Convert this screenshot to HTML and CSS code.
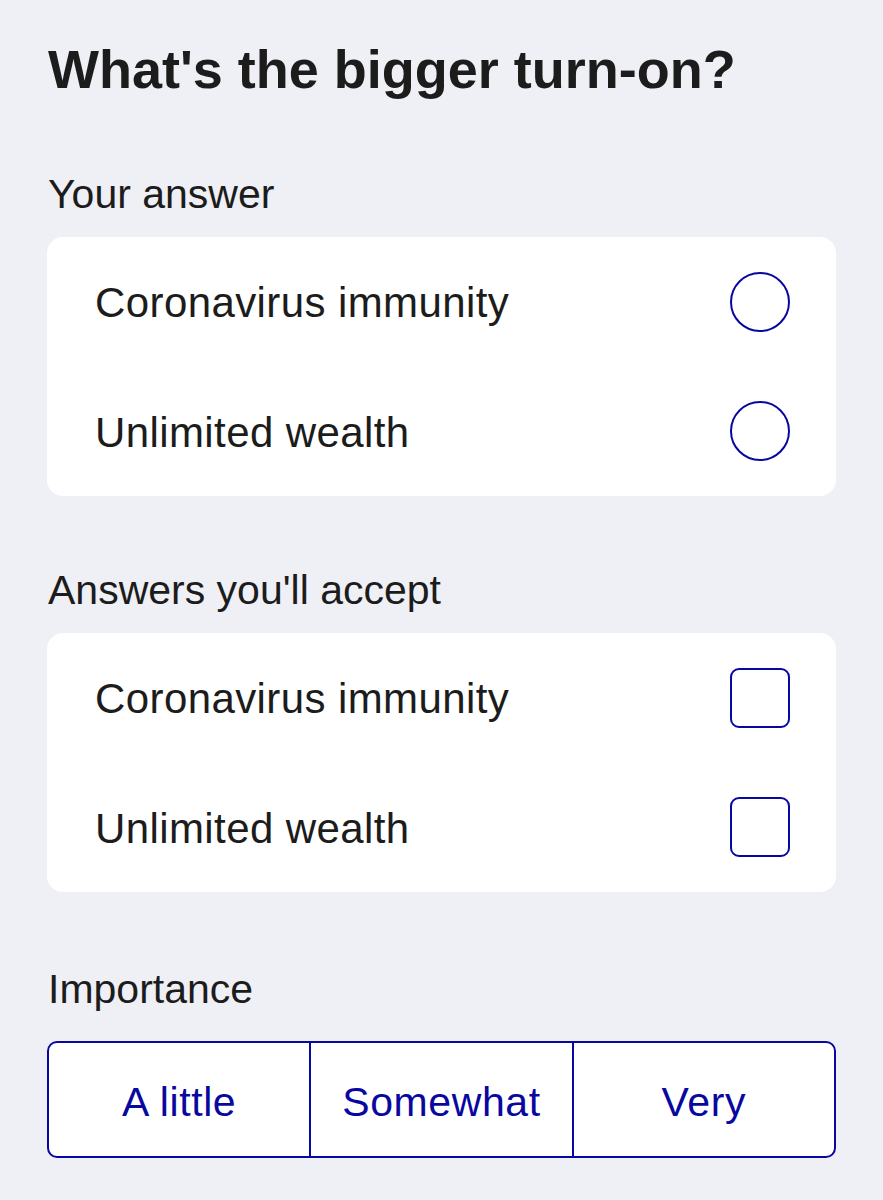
FILE: index.html
```html
<!DOCTYPE html>
<html lang="en">

<head>
  <meta charset="UTF-8" />
  <meta name="viewport" content="width=device-width, initial-scale=1.0" />
  <title>Question</title>
  <link rel="stylesheet" href="styles.css">
</head>

<body>
  <div class="question">
    <h1 class="question-title">What's the bigger turn-on?</h1>

    <section class="block">
      <h2 class="block-label">Your answer</h2>
      <ul class="card">
        <li class="option">
          <span>Coronavirus immunity</span>
          <span class="radio"></span>
        </li>
        <li class="option">
          <span>Unlimited wealth</span>
          <span class="radio"></span>
        </li>
      </ul>
    </section>

    <section class="block">
      <h2 class="block-label">Answers you'll accept</h2>
      <ul class="card">
        <li class="option">
          <span>Coronavirus immunity</span>
          <span class="check"></span>
        </li>
        <li class="option">
          <span>Unlimited wealth</span>
          <span class="check"></span>
        </li>
      </ul>
    </section>

    <section class="block">
      <h2 class="block-label">Importance</h2>
      <div class="segments">
        <button>A little</button>
        <button>Somewhat</button>
        <button>Very</button>
      </div>
    </section>
  </div>
</body>

</html>
```

FILE: styles.css
```css
* {
  box-sizing: border-box;
}

body {
  margin: 0;
  background: #eff0f5;
  font-family: "Liberation Sans", Arial, sans-serif;
  color: #1c1c1c;
}

.question {
  padding: 39px 47px 40px 47px;
}

.question-title {
  margin: 0 0 0 1px;
  font-size: 54px;
  line-height: 60px;
  font-weight: 700;
}

.block {
  margin-top: 71px;
}

.block + .block {
  margin-top: 70px;
}

.block-label {
  margin: 0 0 19px 1px;
  font-size: 41px;
  line-height: 48px;
  font-weight: 400;
}

.block:last-child .block-label {
  padding-top: 3px;
  margin-bottom: 0;
}

.card {
  margin: 0;
  padding: 0;
  list-style: none;
  background: #fff;
  border-radius: 16px;
}

.option {
  height: 129.5px;
  display: flex;
  align-items: center;
  justify-content: space-between;
  padding: 0 46px 0 48px;
  font-size: 42px;
  letter-spacing: 0.4px;
}

.option span:first-child {
  padding-top: 3px;
}

.radio,
.check {
  width: 60px;
  height: 60px;
  border: 2.5px solid #0808a0;
  flex-shrink: 0;
}

.radio {
  border-radius: 50%;
}

.check {
  border-radius: 9px;
}

.segments {
  margin-top: 28px;
  display: flex;
  height: 117px;
  border: 2px solid #0808a0;
  border-radius: 10px;
  background: #fff;
  overflow: hidden;
}

.segments button {
  flex: 1;
  appearance: none;
  border: none;
  background: none;
  font-family: inherit;
  font-size: 41px;
  letter-spacing: 0.6px;
  color: #0808a0;
  padding: 6px 0 0 0;
}

.segments button + button {
  border-left: 2px solid #0808a0;
}
```
